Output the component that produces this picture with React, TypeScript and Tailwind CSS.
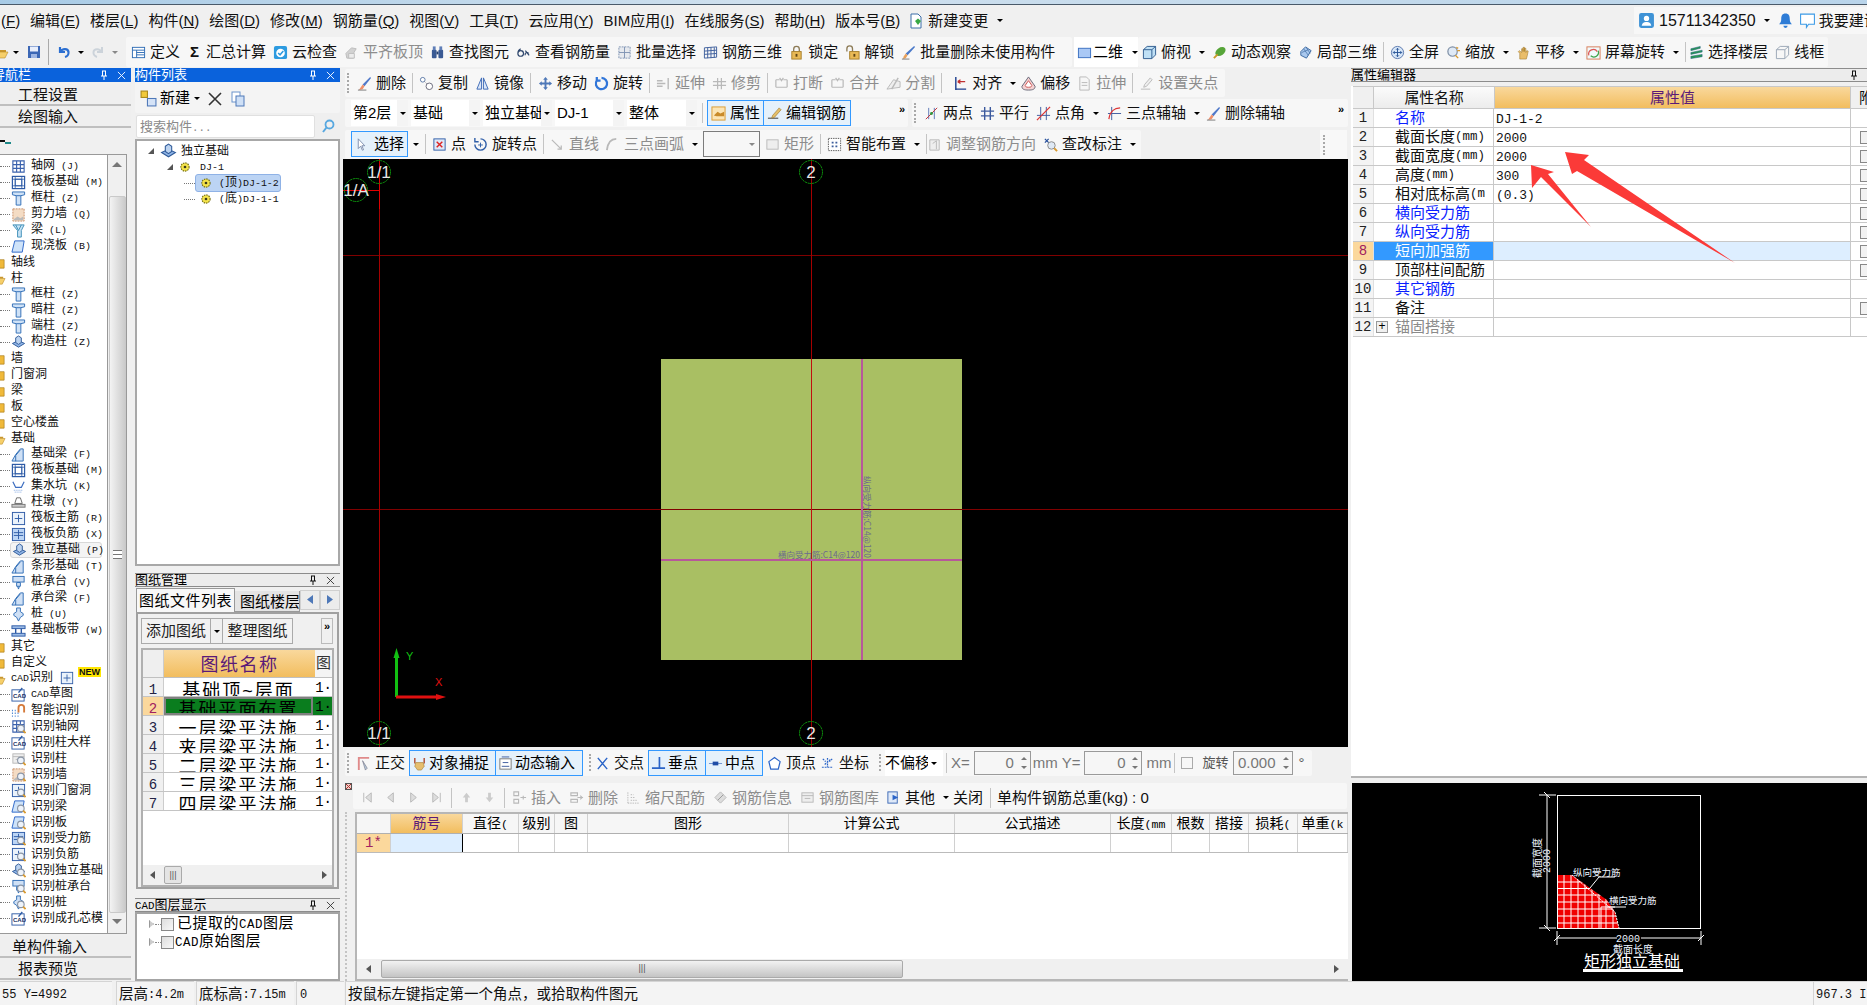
import type { ReactNode } from 'react';

const sans = "[font-family:'Liberation_Sans','Noto_Sans_CJK_SC',sans-serif]";

// half-width latin next to the square CJK glyphs, like the SimSun of the original
function Mx({ t }: { t: string }) {
  const parts = t.split(/([\x20-\x7e]+)/).filter(Boolean);
  return (
    <>
      {parts.map((p, i) =>
        /^[\x20-\x7e]+$/.test(p) ? (
          <span key={i} className="[font-family:'Liberation_Mono',monospace] text-[0.83em] whitespace-pre">{p}</span>
        ) : (
          <span key={i}>{p}</span>
        ),
      )}
    </>
  );
}

const B = '#2f6db5';
const G = '#b9b9b9';

const icons: Record<string, ReactNode> = {
  folder: <><path d="M1 5h5l1 1h6v2H4L1 14z" fill="#c9962c" /><path d="M3 8h12l-3 6H1z" fill="#f6cf6a" stroke="#b98a25" strokeWidth=".6" /></>,
  folderc: <><path d="M1 3h5l1 2h7v9H1z" fill="#f0b93a" stroke="#a87a1c" strokeWidth=".7" /></>,
  save: <><rect x="2" y="2" width="12" height="12" fill="#3c67b5" /><rect x="4" y="2.5" width="8" height="5" fill="#e8eefb" /><rect x="5" y="10" width="6" height="4" fill="#9db5e3" /></>,
  undo: <path d="M4 3v5h5M4.5 8C6 4.5 12 4 12.5 8c.3 2.5-1.5 4.5-3.5 5" fill="none" stroke="#2c6fd1" strokeWidth="2.2" />,
  redo: <path d="M12 3v5H7M11.5 8C10 4.5 4 4 3.5 8c-.3 2.5 1.5 4.5 3.5 5" fill="none" stroke="#ccd3da" strokeWidth="2" />,
  table: <><rect x="1.5" y="2.5" width="13" height="11" fill="#fff" stroke={B} /><path d="M1.5 5.5h13M6 5.5v8M6 8h8M6 10.5h8" stroke={B} /></>,
  cloud: <><rect x="1" y="1" width="14" height="14" rx="2" fill="#2d9be0" /><circle cx="8" cy="8.5" r="4.6" fill="#fff" /><path d="M5.5 8.5l2 2 3.5-4" fill="none" stroke="#2d9be0" strokeWidth="1.6" /></>,
  flush: <><path d="M2 9l6-6 5 1-3 5v5H3z" fill="#d2d2d2" stroke="#bdbdbd" /><path d="M5 9h6v5H5z" fill="#ececec" stroke="#bdbdbd" /></>,
  binoc: <><rect x="2" y="5" width="5" height="9" rx="1" fill="#3a5a94" /><rect x="9" y="5" width="5" height="9" rx="1" fill="#3a5a94" /><rect x="3" y="1.5" width="3" height="4" fill="#5f7eb7" /><rect x="10" y="1.5" width="3" height="4" fill="#5f7eb7" /><rect x="7" y="7" width="2" height="3" fill="#26406f" /></>,
  look: <path d="M2 9a3 3 0 1 0 6 0 3 3 0 1 0-6 0M2 9c0-3 1-4 3-5M10 6l4 5m-4 0a2 2 0 1 1 3.5-2" fill="none" stroke="#30486e" strokeWidth="1.3" />,
  batch: <><rect x="2" y="2" width="12" height="12" fill="#e6e9ee" stroke="#7f93b3" strokeDasharray="2 1" /><path d="M8 2v12M2 8h12" stroke="#7f93b3" /></>,
  grid3: <path d="M1.5 3l13-1v11l-13 1zM5 3v11M8.500 2.500v11.500M12 2.500v11M1.500 6.500l13-1M1.500 10l13-1" fill="none" stroke="#3d5e9c" />,
  lock: <><path d="M5 7V4.500a3 3 0 0 1 6 0V7" fill="none" stroke="#8c7a55" strokeWidth="1.4" /><rect x="3" y="7" width="10" height="8" fill="#e9b955" stroke="#a8802c" /><rect x="7" y="9.500" width="2" height="3" fill="#5f4515" /></>,
  unlock: <><path d="M2 7V4a3 3 0 0 1 6 0v3" fill="none" stroke="#8c7a55" strokeWidth="1.4" /><rect x="5" y="7" width="10" height="8" fill="#e9b955" stroke="#a8802c" /><rect x="9" y="9.500" width="2" height="3" fill="#5f4515" /></>,
  brush: <><path d="M14 1l1 1-8 9-2-2z" fill="#4a79c9" /><path d="M5 9l2 2-2 3-3 1 1-3z" fill="#e8a05a" /><path d="M1 15h8" stroke="#777" /></>,
  rect2: <rect x="1.500" y="3.500" width="13" height="10" fill="#a9c8f5" stroke="#3a6fc0" />,
  cube: <><path d="M1.500 5l4-3.500h9v9l-4 4h-9z" fill="#bfe0f5" stroke="#2f5c8f" /><path d="M1.500 5h9v9.500M10.500 5l4-3.500" fill="none" stroke="#2f5c8f" /></>,
  orbit: <><ellipse cx="9" cy="7" rx="6" ry="4" transform="rotate(-35 9 7)" fill="#57a539" /><path d="M2 14l4-4" stroke="#c99a2a" strokeWidth="2" /></>,
  local: <><path d="M3 7l5-5 6 4-5 8-6-3z" fill="#a9c8ee" stroke="#3b689f" /><path d="M6 4l5 7M9 3l4 6M4 8l7-3" stroke="#3b689f" strokeWidth=".7" /></>,
  full: <><circle cx="8" cy="8" r="6.500" fill="#d8e7f8" stroke="#5a78ad" /><path d="M8 3.500v9M3.500 8h9M6.500 5L8 3.500 9.500 5M6.500 11L8 12.500 9.500 11M5 6.500L3.500 8 5 9.500M11 6.500L12.500 8 11 9.500" fill="none" stroke="#2a5598" /></>,
  zoom: <><circle cx="7" cy="7" r="5" fill="#dfe9f5" stroke="#7d8ea5" strokeWidth="1.300" /><path d="M11 2.500l2 1M12 6l3 0M10 11l3 3" stroke="#d99a2f" strokeWidth="1.500" /></>,
  pan: <path d="M4 15V9L2.500 7l1-1L6 8V4h1.500v3V2.500H9V7V3.500h1.500V8l1-2 1.500.5-1 5L11 15z" fill="#e9bd6a" stroke="#a07a2c" strokeWidth=".6" />,
  rot: <><rect x="1" y="2" width="14" height="13" fill="#f0fafc" stroke="#d77a55" /><path d="M3 11a5 5 0 0 1 9-4" fill="none" stroke="#d55" strokeWidth="1.300" /><path d="M13 6a5 5 0 0 1-8 5.500" fill="none" stroke="#3da34c" strokeWidth="1.300" /></>,
  floors: <><path d="M2 4l10-2.500v2L2 6zM2 8l12-2.500v2L2 10zM2 12l12-2v2.500L2 14.500z" fill="#2a9a55" stroke="#18517f" strokeWidth=".5" /></>,
  wire: <path d="M1.500 5l4-3.500h9v9l-4 4h-9zM1.500 5h9v9.500M10.500 5l4-3.500" fill="none" stroke="#9aa6b5" />,
  doc: <><path d="M3 1h7l3 3v11H3z" fill="#fff" stroke="#3c6ea8" /><path d="M7 8l3-2.500L13 8l-3 4z" fill="#38a844" /></>,
  user: <><rect x="1" y="1" width="14" height="14" rx="2" fill="#3f93d6" /><circle cx="8" cy="6" r="2.500" fill="#fff" /><path d="M3.500 13c.5-3 2.500-3.500 4.500-3.500s4 .5 4.500 3.500z" fill="#fff" /></>,
  bell: <path d="M8 1.500c3 0 4 2 4 5 0 3 1 3.500 2 5H2c1-1.500 2-2 2-5 0-3 1-5 4-5zM6 13h4a2 2 0 0 1-4 0z" fill="#2e7cd6" />,
  chat: <path d="M1.500 2h13v9.500H9L7 14.500v-3H1.500z" fill="#fff" stroke="#3b9ae6" />,
  erase: <><path d="M14 1l1 1-7 9-2-2z" fill="#5079c9" /><path d="M6 9l2 2-2 3-4 1 2-3z" fill="#ef8f6a" /><path d="M1 15h9" stroke="#777" /></>,
  copy: <><circle cx="4" cy="4" r="2.500" fill="#fff" stroke="#5e7ba8" /><circle cx="11" cy="11" r="3.500" fill="#fff" stroke="#667" /><path d="M6 6l2 2" stroke="#667" strokeDasharray="1 1" /></>,
  mirror: <><path d="M7 2v12H2zM9 2v12h5z" fill="#dbe7f8" stroke="#3c69b5" /></>,
  move: <path d="M8 1l2.500 3H9v3h3V5.500L15 8l-3 2.500V9H9v3h1.500L8 15l-2.500-3H7V9H4v1.500L1 8l3-2.500V7h3V4H5.500z" fill="#4e78b8" />,
  rotate: <path d="M8 2a6 6 0 1 1-5 2.600M3 1v4h4" fill="none" stroke="#3176d9" strokeWidth="2.400" />,
  extend: <path d="M1 8h9M1 5h6M1 11h6M13 2v12" fill="none" stroke={G} strokeWidth="1.500" />,
  trim: <path d="M1 6h14M1 10h14M6 2v12M10 2v12" fill="none" stroke={G} strokeWidth="1.300" />,
  breakk: <path d="M2 4h4M10 4h4M2 12h12M2 4v8M14 4v8M6 2l2 3 2-3" fill="none" stroke={G} strokeWidth="1.300" />,
  split: <><path d="M1 14l14-2V6L8 4z" fill="#eee" stroke={G} /><path d="M6 14L13 2" stroke={G} strokeWidth="1.500" /></>,
  align: <><path d="M3 1v14M3 14h11" fill="none" stroke="#1c3f8f" strokeWidth="1.500" /><path d="M5 6h8M5 6l3-2M5 6l3 2" fill="none" stroke="#c03030" strokeWidth="1.300" /></>,
  offset: <><path d="M8 1l7 10c0 3-2 4-7 4s-7-1-7-4z" fill="#f4d2d2" stroke="#667" /><path d="M8 5l3.500 5c0 1.500-1 2-3.500 2s-3.500-.5-3.500-2z" fill="#fff" stroke="#c55" /></>,
  stretch: <><path d="M3 1h7l3 3v11H3z" fill="#f6f6f6" stroke={G} /><path d="M5 7h6M5 10h6" stroke={G} /></>,
  grip: <><path d="M2 14h10M12 2L6 9l-1 3 3-1 6-7z" fill="#eee" stroke={G} /></>,
  prop: <><rect x="1" y="1" width="14" height="14" fill="#fbe5b5" stroke="#d99a2f" /><path d="M3 10l4-4 3 2 4-2v5H6z" fill="#c98b2a" /></>,
  pen: <><path d="M1 13h11" stroke="#333" /><path d="M13 2l2 2-7 8-3 1 1-3z" fill="#e6c06a" stroke="#a07a2c" strokeWidth=".7" /></>,
  twop: <><path d="M2 14L14 2M5 2v12M11 2v12" stroke="#5b76b8" /><path d="M2 14L14 2" stroke="#c33" /><circle cx="8" cy="8" r="1.500" fill="#2a9a3c" /></>,
  para: <path d="M1 5.500h14M1 10.500h14M5 1v14M11 1v14" fill="none" stroke="#3c5a9e" strokeWidth="1.500" />,
  angle: <><path d="M5 1v14M11 1v14M1 10h14" stroke="#3c5a9e" /><path d="M1 15L15 1" stroke="#d33" strokeWidth="1.300" /></>,
  arc3: <><path d="M5 1v14M1 8h14" stroke="#3c5a9e" /><path d="M2 14C3 6 8 2 14 2" fill="none" stroke="#d33" strokeWidth="1.300" /></>,
  cursor: <path d="M4 1v12l3-3 2 5 1.500-.5L8.500 9.500H12z" fill="#fff" stroke="#6c7fa2" />,
  dot: <><rect x="2" y="2" width="12" height="12" fill="#dfe8f8" stroke="#2f5ea8" /><path d="M5 5l6 6M11 5l-6 6" stroke="#d22" strokeWidth="1.500" /></>,
  rpoint: <><path d="M8 2a6 6 0 1 1-6 6M2 1v4h4" fill="none" stroke="#2f5ea8" strokeWidth="1.500" /><path d="M8 6v5M5.500 8.500h5" stroke="#2f5ea8" /></>,
  line: <path d="M2 3l10 10M12 9v4H8" fill="none" stroke={G} strokeWidth="1.300" />,
  arc: <path d="M2 14C3 6 7 2 12 2" fill="none" stroke={G} strokeWidth="2" />,
  box: <rect x="2" y="3" width="12" height="10" fill="#eee" stroke={G} />,
  smart: <><rect x="1.500" y="1.500" width="13" height="13" fill="#fff" stroke="#555" strokeDasharray="1.500 1" /><path d="M5 5h2v2H5zM9 9h2v2H9zM9 5h2v2H9zM5 9h2v2H5z" fill="#3d5e9c" /></>,
  turn: <><path d="M3 3h10v11H3z" fill="#eee" stroke={G} /><path d="M6 7l4-3v9" fill="none" stroke={G} /></>,
  check: <><path d="M2 2l7 7M6 2L2 6" fill="none" stroke="#27509c" strokeWidth="1.300" /><circle cx="9" cy="9" r="4" fill="#dfe9f5" stroke="#888" /><path d="M12 12l3 3" stroke="#d99a2f" strokeWidth="2" /></>,
  ortho: <><path d="M2 2h12M3 2v13" stroke="#e08a8a" strokeWidth="2" /><path d="M7 5l5 8-2 2z" fill="#bcd" stroke="#667" strokeWidth=".6" /></>,
  snap: <><path d="M3 2v6M13 2v6" stroke="#b04a30" strokeWidth="1.500" /><path d="M4 7h8l1 4-3 4H6l-3-4z" fill="#e6be6e" stroke="#a07a2c" strokeWidth=".6" /></>,
  dyn: <><rect x="2" y="3" width="12" height="11" fill="#fff" stroke="#777" /><path d="M4 1h8M4 11h8M5 7h6" stroke="#3c5a9e" /></>,
  cross: <path d="M3 2l10 12M13 2L3 14" stroke="#2a64c8" strokeWidth="1.500" />,
  perp: <path d="M1 13h14M9 1v12" fill="none" stroke="#2a64c8" strokeWidth="1.800" />,
  mid: <><path d="M1 8h14" stroke="#6c8fd0" /><rect x="5" y="6" width="6" height="4" fill="#1f4ca6" /></>,
  vertex: <path d="M8 1.500l6 4.500-2 8H4L2 6z" fill="#fff" stroke="#2a64c8" strokeWidth="1.300" />,
  coord: <path d="M8 2v10M2 12h11M3 3l3 3M13 3l-3 3M5 9l6-5" fill="none" stroke="#2a64c8" strokeDasharray="2 1" strokeWidth="1.300" />,
  first: <path d="M4 3v10M12 3L6 8l6 5z" fill="#ddd" stroke={G} />,
  prev: <path d="M11 3L5 8l6 5z" fill="#ddd" stroke={G} />,
  next: <path d="M5 3l6 5-6 5z" fill="#ddd" stroke={G} />,
  last: <path d="M12 3v10M4 3l6 5-6 5z" fill="#ddd" stroke={G} />,
  up: <path d="M8 3l4 5H9.500v5h-3V8H4z" fill="#ccc" />,
  down: <path d="M8 13l4-5H9.500V3h-3v5H4z" fill="#ccc" />,
  insert: <path d="M2 2h5v4H2zM2 10h5v4H2zM9 8h6M12 6v4" fill="none" stroke={G} strokeWidth="1.200" />,
  del: <path d="M2 3h7v3H2zM2 10h7v3H2zM9 8h6M12 6l2 2-2 2" fill="none" stroke={G} strokeWidth="1.200" />,
  scale: <path d="M2 14V2M2 14h12M5 11h7M5 8h5M5 5h3" fill="none" stroke={G} strokeDasharray="1.500 1" />,
  info: <><path d="M2 8l6-6 6 6-6 6z" fill="#ddd" stroke={G} /><path d="M5 11l6-6" stroke="#999" /></>,
  lib: <><rect x="2" y="3" width="12" height="10" fill="#eee" stroke={G} /><path d="M2 6h12M5 9h6" stroke={G} /></>,
  other: <><rect x="2" y="2" width="10" height="12" fill="#dfe9f8" stroke="#3c69b5" /><path d="M7 5l6 3-6 3z" fill="#2a64c8" /></>,
  gear: <><circle cx="8" cy="8" r="5.500" fill="#f4e34a" stroke="#6f6a12" strokeWidth="1.400" strokeDasharray="2 1.200" /><circle cx="8" cy="8" r="1.800" fill="#3a3a1a" /></>,
  found: <><path d="M1.500 9l6.500-3 6.500 3-6.500 4z" fill="#8fb4e6" stroke="#305b99" /><path d="M5 3l3-2 3 2v5l-3 2-3-2z" fill="#bcd3f0" stroke="#305b99" /></>,
  newb: <><rect x="1" y="1" width="6" height="6" fill="#f1c93b" stroke="#a8871b" /><rect x="7" y="8" width="8" height="7" fill="#d5e3f7" stroke="#4e78b8" /></>,
  sheets: <><rect x="2" y="1" width="8" height="10" fill="#fff" stroke="#6a93cc" /><rect x="6" y="5" width="8" height="10" fill="#cfe0f6" stroke="#4e78b8" /></>,
  search: <><circle cx="9.500" cy="6.500" r="4" fill="none" stroke="#58a8e0" strokeWidth="1.800" /><path d="M6.500 9.500L3 14" stroke="#58a8e0" strokeWidth="2" /></>,
  axis: <path d="M2 2v12h12V2zM6 2v12M10 2v12M2 6h12M2 10h12" fill="none" stroke="#3b62ad" strokeWidth="1.200" />,
  raft: <><rect x="1.500" y="1.500" width="13" height="13" fill="none" stroke="#2e5ba6" strokeWidth="1.300" /><rect x="4.500" y="4.500" width="7" height="7" fill="none" stroke="#2e5ba6" /><path d="M1.500 4.500h13M1.500 11.500h13M4.500 1.500v13M11.500 1.500v13" stroke="#2e5ba6" strokeWidth=".8" /></>,
  pillar: <><path d="M1.500 1h13v3l-4 1v10h-5V5l-4-1z" fill="#cfe2f7" stroke="#2f6db5" /><path d="M5.500 5h5" stroke="#2f6db5" /></>,
  wall: <><rect x="2" y="2" width="12" height="13" fill="#f4dcc4" stroke="#c78e66" strokeDasharray="2 1" /><path d="M3 13l4-3 3 2 3-2v4H3z" fill="#bbb" /></>,
  beam: <><path d="M2 2h12l-3 6v7H7V8z" fill="#c6e2f4" stroke="#3f8fb7" /><path d="M5 2l3 6 3-6" fill="none" stroke="#3f8fb7" /></>,
  slab: <path d="M4 2h10l-2 12H1z" fill="#cfe3f9" stroke="#2a64c8" />,
  gbeam: <><path d="M1 15l4-7 5-6h3v13z" fill="#cfe0f5" stroke="#2f6db5" /><path d="M5 15V9l5-6" fill="none" stroke="#2f6db5" /></>,
  pit: <><path d="M2 3l3 6h6l3-6" fill="none" stroke="#3c6dc0" strokeWidth="1.300" /><path d="M3 12h10M4 14h8" stroke="#7ea4df" strokeDasharray="1 1" /></>,
  pier: <><path d="M6 3h4l2 6H4z" fill="#fff" stroke="#666" /><rect x="1" y="10" width="14" height="3" fill="#ccc" stroke="#777" /></>,
  mainb: <><rect x="1.500" y="1.500" width="13" height="13" fill="#eaf2fb" stroke="#2e5ba6" /><path d="M8 4v8M4 8h8" stroke="#2e5ba6" /></>,
  negb: <><rect x="1.500" y="1.500" width="13" height="13" fill="#bcd5f5" stroke="#2e5ba6" /><path d="M8 3v10M3 6h10M3 9h10" stroke="#2e5ba6" /></>,
  cap: <><rect x="2" y="1.500" width="12" height="6" fill="#cfe0f5" stroke="#2f6db5" /><path d="M6 8h4v4H6zM7 12l1 3 1-3" fill="#cfe0f5" stroke="#2f6db5" /></>,
  pile: <path d="M6 1h4v4l3 2v2l-3 2-2 4-2-4-3-2V7l3-2z" fill="#cfe0f5" stroke="#2f6db5" />,
  band: <><rect x="1" y="3" width="14" height="3" fill="#9bbbe6" stroke="#2e5ba6" /><rect x="1" y="11" width="14" height="3" fill="#9bbbe6" stroke="#2e5ba6" /><path d="M5 6v5M11 6v5" stroke="#2e5ba6" strokeWidth="1.500" /></>,
  cad: <><rect x="1" y="3" width="13" height="12" fill="#fff" stroke="#2e5ba6" /><path d="M12 1L8 6" stroke="#2e5ba6" strokeWidth="1.500" /><text x="2" y="12" fontSize="6.500" fontWeight="700" fill="#1b2f66" fontFamily="Liberation Sans">CAD</text></>,
  smartid: <><path d="M1 14h1M4 14h1M7 14h1M1 11h1M4 11h1M1 8h1M4 8h1M7 11h1" stroke="#3a7ad0" strokeWidth="1.500" /><path d="M8 10V5a3 3 0 0 1 6 0v5" fill="none" stroke="#d57a3a" strokeWidth="2" /></>,
};

const lens = (
  <>
    <circle cx="10.500" cy="10" r="3.500" fill="#eef3fa" stroke="#8a95a5" strokeWidth="1.200" />
    <path d="M13 12.500l2.500 2.500" stroke="#d99a2f" strokeWidth="1.800" />
  </>
);

function Ic({ n, s = 16, find }: { n: string; s?: number; find?: boolean }) {
  return (
    <svg viewBox="0 0 16 16" width={s} height={s} className="shrink-0">
      {icons[n]}
      {find && lens}
    </svg>
  );
}

function Caret({ dim }: { dim?: boolean }) {
  return <span className={`shrink-0 w-0 h-0 border-x-[3px] border-x-transparent border-t-[3px] ${dim ? 'border-t-[#888]' : 'border-t-black'}`} />;
}

function Sep() {
  return <span className="shrink-0 w-px h-[20px] bg-[#c4c4c4] mx-[-1px]" />;
}

function Handle() {
  return <span className="shrink-0 h-[20px] w-[3px] border-l-[2px] border-dotted border-[#a8a8a8]" />;
}

function Tool({ i, t, dim, caret, glyph, className = '' }: { i?: string; t: string; dim?: boolean; caret?: boolean; glyph?: string; className?: string }) {
  return (
    <div className={`flex items-center shrink-0 h-full gap-[4px] whitespace-nowrap ${dim ? 'text-[#8d8d8d]' : 'text-[#111]'} ${className}`}>
      {i && <Ic n={i} s={15} />}
      {glyph && <span className="w-[15px] text-center font-bold">{glyph}</span>}
      <span>{t}</span>
      {caret && <span className="ml-[4px] flex"><Caret /></span>}
    </div>
  );
}

function Strip({ children, className = '' }: { children: ReactNode; className?: string }) {
  return <div className={`flex items-center gap-[7px] bg-[#f7f7f7] rounded-[2px] text-[15px] leading-[18px] ${className}`}>{children}</div>;
}

function Combo({ w, t }: { w: string; t: string }) {
  return (
    <div className={`flex items-center h-[26px] bg-white shrink-0 overflow-hidden ${w}`}>
      <span className="flex-1 pl-[2px] whitespace-nowrap overflow-hidden">{t}</span>
      <span className="w-[11px] h-full bg-[#f4f4f4] flex items-center justify-center"><Caret /></span>
    </div>
  );
}

const menu: [string, string][] = [
  ['编辑', 'E'], ['楼层', 'L'], ['构件', 'N'], ['绘图', 'D'], ['修改', 'M'], ['钢筋量', 'Q'], ['视图', 'V'], ['工具', 'T'],
  ['云应用', 'Y'], ['BIM应用', 'I'], ['在线服务', 'S'], ['帮助', 'H'], ['版本号', 'B'],
];

function MenuBar() {
  return (
    <div className="h-[31px] flex items-center text-[15px] leading-[18px] text-[#111] pl-[1px] shrink-0">
      <span className="w-[20px] mr-[9px]">(<u>F</u>)</span>
      <div className="flex items-center gap-[10px]">
        {menu.map(([a, k]) => (
          <span key={a} className="whitespace-nowrap">{a}(<u>{k}</u>)</span>
        ))}
      </div>
      <div className="flex items-center ml-[8px] gap-[4px]">
        <Ic n="doc" />
        <span>新建变更</span>
        <span className="ml-[5px] flex"><Caret /></span>
      </div>
      <div className="ml-auto flex items-center h-[27px] w-[233px] bg-[#f7f7f7] pl-[4px] gap-[4px] overflow-hidden whitespace-nowrap">
        <Ic n="user" s={17} />
        <span className="[font-family:'Liberation_Sans',sans-serif] text-[16px]">15711342350</span>
        <span className="ml-[4px] mr-[3px] flex"><Caret /></span>
        <Ic n="bell" s={17} />
        <span className="ml-[1px]"><Ic n="chat" s={17} /></span>
        <span className="ml-[-1px]">我要建议</span>
      </div>
    </div>
  );
}

function TopTools() {
  return (
    <div className="h-[32px] flex items-stretch shrink-0 pb-[1px] pt-[1px] text-[15px]">
      <div className="w-[126px] flex items-center shrink-0 overflow-hidden">
        <span className="ml-[-7px]"><Ic n="folder" /></span>
        <span className="ml-[4px] flex"><Caret /></span>
        <span className="ml-[7px]"><Ic n="save" /></span>
        <span className="w-px h-[26px] bg-[#aaa] ml-[6px]" />
        <span className="ml-[7px]"><Ic n="undo" /></span>
        <span className="ml-[6px] flex"><Caret /></span>
        <span className="ml-[6px]"><Ic n="redo" /></span>
        <span className="ml-[6px] flex"><Caret dim /></span>
      </div>
      <Strip className="w-[946px] pl-[5px]">
        <Tool i="table" t="定义" />
        <Tool glyph="Σ" t="汇总计算" />
        <Tool i="cloud" t="云检查" />
        <Tool i="flush" t="平齐板顶" dim />
        <Tool i="binoc" t="查找图元" />
        <Tool i="look" t="查看钢筋量" />
        <Tool i="batch" t="批量选择" />
        <Tool i="grid3" t="钢筋三维" />
        <Tool i="lock" t="锁定" />
        <Tool i="unlock" t="解锁" />
        <Tool i="brush" t="批量删除未使用构件" />
      </Strip>
      <div className="w-[64px] ml-[2px] flex items-center bg-white pl-[3px] shrink-0 whitespace-nowrap">
        <Ic n="rect2" s={15} />
        <span className="ml-[1px]">二维</span>
        <span className="ml-[9px] flex"><Caret /></span>
      </div>
      <Strip className="w-[690px] pl-[4px]">
        <Tool i="cube" t="俯视" caret />
        <Tool i="orbit" t="动态观察" />
        <Tool i="local" t="局部三维" />
        <Sep />
        <Tool i="full" t="全屏" />
        <Tool i="zoom" t="缩放" caret />
        <Tool i="pan" t="平移" caret />
        <Tool i="rot" t="屏幕旋转" caret />
        <Sep />
        <Tool i="floors" t="选择楼层" className="-ml-[3px]" />
        <Tool i="wire" t="线框" />
      </Strip>
    </div>
  );
}

function PanelHead({ t, active, close = true, clip }: { t: string; active?: boolean; close?: boolean; clip?: number }) {
  return (
    <div className={`h-[14px] flex items-center shrink-0 overflow-hidden text-[13px] leading-[14px] ${active ? 'bg-[#0a62dc] text-white' : 'bg-[#ececec] border-y border-[#8c8c8c] text-black'}`}>
      <span className="flex-1 whitespace-nowrap overflow-hidden" style={clip ? { marginLeft: clip } : undefined}><Mx t={t} /></span>
      <svg viewBox="0 0 10 10" width="10" height="10" className="mr-[8px] shrink-0">
        <path d="M3 1h4M3.500 1v5M6.500 1v5M2 6h6M5 6v4" fill="none" stroke={active ? '#fff' : '#111'} />
      </svg>
      {close && (
        <svg viewBox="0 0 10 10" width="9" height="9" className="mr-[5px] shrink-0">
          <path d="M1 1l8 8M9 1l-8 8" stroke={active ? '#fff' : '#333'} />
        </svg>
      )}
    </div>
  );
}

function NavBtn({ t, pad = 'pl-[18px]' }: { t: string; pad?: string }) {
  return (
    <div className={`h-[22px] flex items-center ${pad} pt-[2px] text-[15px] text-[#111] bg-[#efefef] border-b-2 border-[#bfbfbf] shrink-0`}>{t}</div>
  );
}

type Row = { t: string; i?: string; find?: boolean; kind?: 'open' | 'closed' };

const navRows: Row[] = [
  { t: '轴网 (J)', i: 'axis' }, { t: '筏板基础 (M)', i: 'raft' }, { t: '框柱 (Z)', i: 'pillar' }, { t: '剪力墙 (Q)', i: 'wall' },
  { t: '梁 (L)', i: 'beam' }, { t: '现浇板 (B)', i: 'slab' }, { t: '轴线', kind: 'closed' }, { t: '柱', kind: 'open' },
  { t: '框柱 (Z)', i: 'pillar' }, { t: '暗柱 (Z)', i: 'pillar' }, { t: '端柱 (Z)', i: 'pillar' }, { t: '构造柱 (Z)', i: 'found' },
  { t: '墙', kind: 'closed' }, { t: '门窗洞', kind: 'closed' }, { t: '梁', kind: 'closed' }, { t: '板', kind: 'closed' },
  { t: '空心楼盖', kind: 'closed' }, { t: '基础', kind: 'open' }, { t: '基础梁 (F)', i: 'gbeam' }, { t: '筏板基础 (M)', i: 'raft' },
  { t: '集水坑 (K)', i: 'pit' }, { t: '柱墩 (Y)', i: 'pier' }, { t: '筏板主筋 (R)', i: 'mainb' }, { t: '筏板负筋 (X)', i: 'negb' },
  { t: '独立基础 (P)', i: 'found' }, { t: '条形基础 (T)', i: 'gbeam' }, { t: '桩承台 (V)', i: 'cap' }, { t: '承台梁 (F)', i: 'gbeam' },
  { t: '桩 (U)', i: 'pile' }, { t: '基础板带 (W)', i: 'band' }, { t: '其它', kind: 'closed' }, { t: '自定义', kind: 'closed' },
  { t: 'CAD识别', kind: 'open' }, { t: 'CAD草图', i: 'cad' }, { t: '智能识别', i: 'smartid' }, { t: '识别轴网', i: 'axis', find: true },
  { t: '识别柱大样', i: 'cad' }, { t: '识别柱', i: 'lib', find: true }, { t: '识别墙', i: 'wall', find: true }, { t: '识别门窗洞', i: 'mainb', find: true },
  { t: '识别梁', i: 'slab', find: true }, { t: '识别板', i: 'slab', find: true }, { t: '识别受力筋', i: 'negb', find: true }, { t: '识别负筋', i: 'mainb', find: true },
  { t: '识别独立基础', i: 'found', find: true }, { t: '识别桩承台', i: 'cap', find: true }, { t: '识别桩', i: 'pile', find: true }, { t: '识别成孔芯模', i: 'cad' },
];

function NavTree() {
  return (
    <div className="flex-1 min-w-0 bg-white pt-[3px] overflow-hidden text-[12px] leading-[16px] text-[#111] border-r border-[#999]">
      {navRows.map((r, idx) =>
        r.kind ? (
          <div key={idx} className="h-[16px] flex items-center whitespace-nowrap">
            <span className="ml-[-9px] mr-[5px] flex"><Ic n={r.kind === 'open' ? 'folder' : 'folderc'} s={15} /></span>
            <span><Mx t={r.t} /></span>
            {r.t === 'CAD识别' && (
              <>
                <span className="ml-[7px] flex"><Ic n="mainb" s={14} /></span>
                <span className="ml-[4px] px-px bg-[#ffe600] text-[9px] leading-[10px] font-bold [font-family:'Liberation_Sans',sans-serif] self-start mt-[-3px]">NEW</span>
              </>
            )}
          </div>
        ) : (
          <div key={idx} className="h-[16px] flex items-center whitespace-nowrap">
            <span className="w-[10px] border-t border-dotted border-[#777] shrink-0" />
            <span className={`flex items-center gap-[4px] pl-[1px] pr-[4px] h-[16px] rounded-[3px] ${r.t.startsWith('独立基础') ? 'bg-[#f4f4f4] border border-[#d8d8d8] w-[92px]' : ''}`}>
              <Ic n={r.i!} s={15} find={r.find} />
              <span className="ml-[1px]"><Mx t={r.t} /></span>
            </span>
          </div>
        ),
      )}
    </div>
  );
}

function VScroll() {
  return (
    <div className="w-[18px] shrink-0 bg-[#f0f0f0] flex flex-col items-center py-[6px]">
      <span className="w-0 h-0 border-x-[5px] border-x-transparent border-b-[5px] border-b-[#777] mt-[1px]" />
      <div className="w-[17px] flex-1 mt-[29px] mb-[6px] rounded-[2px] bg-[linear-gradient(90deg,#f3f3f3,#cbcbcb)] border border-[#c9c9c9] flex items-center justify-center">
        <span className="w-[9px] h-[9px] border-y border-[#777] bg-[linear-gradient(#fff_40%,#777_40%,#777_60%,#fff_60%)]" />
      </div>
      <span className="w-0 h-0 border-x-[5px] border-x-transparent border-t-[5px] border-t-[#777] mb-[3px]" />
    </div>
  );
}

function NavPanel() {
  return (
    <div className="w-[131px] shrink-0 flex flex-col">
      <PanelHead t="导航栏" active clip={-8} />
      <div className="h-[2px] shrink-0" />
      <NavBtn t="工程设置" />
      <NavBtn t="绘图输入" />
      <div className="h-[26px] shrink-0 flex items-center">
        <span className="w-[5px] h-[2px] bg-[#111]" />
        <span className="w-[6px] h-[2px] bg-[#1e8a8a] mt-[3px]" />
      </div>
      <div className="h-[780px] w-[127px] flex border border-l-0 border-[#999] shrink-0">
        <NavTree />
        <VScroll />
      </div>
      <div className="h-[2px] shrink-0" />
      <NavBtn t="单构件输入" pad="pl-[12px]" />
      <NavBtn t="报表预览" />
    </div>
  );
}

function Tri({ open }: { open?: boolean }) {
  return open ? (
    <span className="shrink-0 w-0 h-0 border-l-[6px] border-l-transparent border-b-[6px] border-b-[#555]" />
  ) : (
    <span className="shrink-0 w-[5px] h-[8px] [clip-path:polygon(0_0,100%_50%,0_100%)] bg-[#999]" />
  );
}

function ListPanel() {
  return (
    <div className="flex flex-col h-[498px] shrink-0">
      <PanelHead t="构件列表" active />
      <div className="h-[31px] flex items-center pl-[5px] pt-[2px] text-[15px] shrink-0 bg-[#f4f4f4] rounded-[2px]">
        <Ic n="newb" s={17} />
        <span className="ml-[3px]">新建</span>
        <span className="ml-[4px] flex"><Caret /></span>
        <svg viewBox="0 0 14 14" width="14" height="14" className="ml-[8px]"><path d="M1 1l12 12M13 1L1 13" stroke="#333" strokeWidth="1.600" /></svg>
        <span className="ml-[8px] flex"><Ic n="sheets" /></span>
      </div>
      <div className="h-[26px] flex items-center shrink-0 bg-[#efefef]">
        <div className="w-[179px] ml-px h-[23px] bg-white rounded-[2px] border border-[#e0e0e0] text-[13px] text-[#8a8a8a] pl-[3px] leading-[22px]"><Mx t="搜索构件..." /></div>
        <span className="ml-[5px] flex"><Ic n="search" /></span>
      </div>
      <div className="flex-1 bg-white border-2 border-[#a8a8a8] text-[12px] leading-[16px] pt-[2px] text-[#111] overflow-hidden">
        <div className="h-[16px] flex items-center pl-[11px] gap-[6px]"><Tri open /><Ic n="found" s={17} /><span className="ml-[-2px]">独立基础</span></div>
        <div className="h-[16px] flex items-center pl-[30px] gap-[6px]"><Tri open /><Ic n="gear" s={12} /><span className="ml-[3px]"><Mx t="DJ-1" /></span></div>
        <div className="h-[16px] flex items-center pl-[47px]">
          <span className="w-[11px] border-t border-dotted border-[#777]" />
          <span className="flex items-center h-[18px] w-[86px] rounded-[3px] bg-[#bcd4f4] border border-[#8fb2e6] pl-[4px]">
            <Ic n="gear" s={12} /><span className="ml-[7px]"><Mx t="(顶)DJ-1-2" /></span>
          </span>
        </div>
        <div className="h-[16px] flex items-center pl-[47px]">
          <span className="w-[11px] border-t border-dotted border-[#777]" />
          <span className="flex items-center pl-[5px]"><Ic n="gear" s={12} /><span className="ml-[7px]"><Mx t="(底)DJ-1-1" /></span></span>
        </div>
      </div>
    </div>
  );
}

const sheets = ['基础顶~层面', '基础平面布置', '一层梁平法施', '夹层梁平法施', '二层梁平法施', '三层梁平法施', '四层梁平法施'];

function SheetPanel() {
  return (
    <div className="flex flex-col mt-[7px] h-[316px] shrink-0">
      <PanelHead t="图纸管理" />
      <div className="h-[25px] flex items-end shrink-0 text-[15px] pl-px">
        <div className="w-[99px] h-[24px] bg-[#f8f8f8] border border-b-0 border-[#999] text-center leading-[24px] tracking-[0.5px] shrink-0">图纸文件列表</div>
        <div className="w-[65px] h-[21px] bg-[#e4e4e4] border-b border-r border-[#999] leading-[21px] whitespace-nowrap overflow-hidden pl-[5px] shrink-0">图纸楼层构</div>
        <div className="w-[20px] h-[20px] bg-[#ececec] border border-[#d0d0d0] self-center flex items-center justify-center"><span className="w-[6px] h-[9px] bg-[#4e78b8] [clip-path:polygon(100%_0,0_50%,100%_100%)]" /></div>
        <div className="w-[20px] h-[20px] bg-[#ececec] border border-[#d0d0d0] self-center flex items-center justify-center"><span className="w-[6px] h-[9px] bg-[#4e78b8] [clip-path:polygon(0_0,100%_50%,0_100%)]" /></div>
      </div>
      <div className="flex-1 border-2 border-[#a0a0a0] mx-px bg-[#f0f0f0] flex flex-col px-[3px] min-h-0">
        <div className="h-[34px] flex items-start pt-[4px] text-[15px] shrink-0">
          <div className="h-[26px] w-[70px] border border-[#aaa] bg-[#f2f2f2] text-center leading-[24px] text-[#222]">添加图纸</div>
          <div className="h-[26px] w-[12px] border-y border-r border-[#aaa] flex items-center justify-center"><Caret /></div>
          <div className="h-[26px] w-[70px] border-y border-r border-[#aaa] bg-[#f2f2f2] text-center leading-[24px] text-[#222]">整理图纸</div>
          <div className="ml-auto mr-[1px] h-[26px] w-[12px] border border-[#bbb] text-[11px] leading-[14px] font-bold text-center">»</div>
        </div>
        <div className="flex-1 border-2 border-[#b0b0b0] bg-white flex flex-col min-h-0">
          <div className="h-[28px] flex shrink-0 border-b border-[#c0c0c0]">
            <div className="w-[21px] bg-[#efefef] border-r border-[#ccc]" />
            <div className="w-[151px] bg-[linear-gradient(#f9d89c,#f2bd5e)] text-center text-[18px] tracking-[1.500px] leading-[30px] text-[#5a1a78]">图纸名称</div>
            <div className="flex-1 bg-[#f4f4f4] text-[15px] overflow-hidden leading-[26px] pl-px text-[#333]">图</div>
          </div>
          {sheets.map((s, i) => (
            <div key={s} className="h-[19px] flex shrink-0 border-b border-[#c4c4c4] overflow-hidden">
              <div className={`w-[21px] text-center text-[14px] leading-[24px] border-r border-[#ccc] ${i === 1 ? 'bg-[#fbd89c] text-[#a02060]' : 'bg-[#f0f0f0] text-[#224]'} [font-family:'Liberation_Mono',monospace]`}>{i + 1}</div>
              <div className={`w-[151px] text-center text-[18px] tracking-[2px] whitespace-nowrap overflow-hidden text-black ${i === 1 ? 'bg-[#0a7d1e] border-2 border-[#808080] leading-[23px]' : 'leading-[26px]'}`}>{s}</div>
              <div className={`flex-1 pl-[2px] text-[14px] leading-[20px] [font-family:'Liberation_Mono',monospace] ${i === 1 ? 'bg-[#0a7d1e]' : ''}`}>1·</div>
            </div>
          ))}
          <div className="flex-1" />
          <div className="h-[20px] shrink-0 bg-[#f0f0f0] flex items-center pl-[7px]">
            <span className="w-[5px] h-[8px] bg-[#555] [clip-path:polygon(100%_0,0_50%,100%_100%)]" />
            <span className="ml-[9px] w-[18px] h-[18px] bg-[#e4e4e4] border border-[#aaa] rounded-[2px] text-[9px] leading-[16px] text-center text-[#555]">|||</span>
            <span className="ml-auto mr-[5px] w-[5px] h-[8px] bg-[#555] [clip-path:polygon(0_0,100%_50%,0_100%)]" />
          </div>
        </div>
      </div>
    </div>
  );
}

function LayerPanel() {
  return (
    <div className="flex flex-col mt-[9px] flex-1 min-h-0">
      <PanelHead t="CAD图层显示" />
      <div className="flex-1 bg-white border-2 border-[#a4a4a4] pl-[12px] pt-[1px] text-[15px] leading-[18px] tracking-[0.5px]">
        {['已提取的CAD图层', 'CAD原始图层'].map((t, i) => (
          <div key={t} className="h-[18px] flex items-center">
            <span className="w-[5px] h-[8px] border border-[#999] [clip-path:polygon(0_0,100%_50%,0_100%)] bg-[#ccc]" />
            <span className="w-[6px] ml-px border-t border-dotted border-[#888]" />
            <span className="w-[13px] h-[13px] border border-[#888] bg-[linear-gradient(135deg,#ddd,#f8f8f8)] shrink-0" />
            <span className={`whitespace-nowrap ${i ? 'ml-px' : 'ml-[3px]'}`}><Mx t={t} /></span>
          </div>
        ))}
      </div>
    </div>
  );
}

function EditTools() {
  return (
    <>
      <div className="h-[28px] mt-px flex shrink-0 pl-[2px]">
        <Strip className="w-[880px] pl-[2px]">
          <Handle />
          <Tool i="erase" t="删除" />
          <Sep />
          <Tool i="copy" t="复制" />
          <Tool i="mirror" t="镜像" />
          <Sep />
          <Tool i="move" t="移动" className="ml-[1px]" />
          <Tool i="rotate" t="旋转" />
          <Sep />
          <Tool i="extend" t="延伸" dim />
          <Tool i="trim" t="修剪" dim />
          <Sep />
          <Tool i="breakk" t="打断" dim />
          <Tool i="breakk" t="合并" dim />
          <Tool i="split" t="分割" dim />
          <Sep />
          <Tool i="align" t="对齐" caret className="ml-[5px]" />
          <Tool i="offset" t="偏移" className="-ml-[2px]" />
          <Tool i="stretch" t="拉伸" dim />
          <Sep />
          <Tool i="grip" t="设置夹点" dim />
        </Strip>
      </div>
      <div className="h-[28px] mt-[2px] flex shrink-0 pl-[2px] gap-[4px]">
        <Strip className="w-[563px] pl-[6px] !gap-[3px]">
          <Combo w="w-[57px]" t="第2层" />
          <Combo w="w-[69px]" t="基础" />
          <Combo w="w-[69px]" t="独立基础" />
          <Combo w="w-[69px]" t="DJ-1" />
          <Combo w="w-[70px]" t="整体" />
          <span className="w-px h-[20px] bg-[#c4c4c4] ml-[2px]" />
          <div className="flex h-[26px] ml-[1px]">
            <div className="w-[57px] border border-[#3399ff] bg-[#e5f1fb] flex items-center pl-[3px] gap-[4px]"><Ic n="prop" s={15} />属性</div>
            <div className="w-[87px] border border-l-0 border-[#3399ff] bg-[#e5f1fb] flex items-center pl-[3px] gap-[4px]"><Ic n="pen" s={15} />编辑钢筋</div>
          </div>
          <span className="text-[11px] leading-[12px] font-bold self-start mt-[4px] ml-auto mr-[3px]">»</span>
        </Strip>
        <Strip className="w-[436px] pl-[2px]">
          <Handle />
          <Tool i="twop" t="两点" />
          <Tool i="para" t="平行" />
          <Tool i="angle" t="点角" caret />
          <Tool i="arc3" t="三点辅轴" caret className="ml-[1px]" />
          <Tool i="erase" t="删除辅轴" className="-ml-[1px]" />
          <span className="text-[11px] leading-[12px] font-bold self-start mt-[4px] ml-auto mr-[4px]">»</span>
        </Strip>
      </div>
      <div className="h-[29px] mt-[3px] flex shrink-0 pl-[2px]">
        <Strip className="w-[796px] pl-[6px] pb-[1px]">
          <div className="h-[26px] w-[57px] border border-[#3399ff] bg-[#e5f1fb] flex items-center pl-[3px] gap-[6px] shrink-0"><Ic n="cursor" s={13} />选择</div>
          <span className="flex ml-[-2px]"><Caret /></span>
          <Sep />
          <Tool i="dot" t="点" />
          <Tool i="rpoint" t="旋转点" />
          <Sep />
          <Tool i="line" t="直线" dim />
          <Tool i="arc" t="三点画弧" dim caret className="-ml-[1px]" />
          <div className="w-[57px] h-[26px] -ml-[2px] bg-[#f7f7f7] border border-[#7c7c7c] flex items-center justify-end pr-[4px] shrink-0"><Caret dim /></div>
          <Tool i="box" t="矩形" dim className="-ml-[2px]" />
          <Sep />
          <Tool i="smart" t="智能布置" caret />
          <Sep />
          <Tool i="turn" t="调整钢筋方向" dim className="-ml-[6px]" />
          <Tool i="check" t="查改标注" caret />
        </Strip>
        <div className="ml-auto w-[27px] mr-px bg-[#f8f8f8] flex items-center pl-[3px]"><span className="h-[20px] w-[3px] border-l-[2px] border-dotted border-[#a8a8a8]" /></div>
      </div>
    </>
  );
}

function Canvas() {
  const bubbles: [number, number, string][] = [[379, 172, '1/1'], [356, 190, '1/A'], [811, 172, '2'], [379, 733, '1/1'], [811, 733, '2']];
  return (
    <div className="h-[588px] bg-black shrink-0">
      <svg viewBox="343 159 1005 588" width="1005" height="588" className="block">
        <rect x="661" y="359" width="301" height="301" fill="#a9bf63" />
        <path d="M343 255.500h1005M343 509.500h1005" stroke="#800000" strokeWidth="1" />
        <path d="M379.500 159v588M811.500 159v588" stroke="#a50000" strokeWidth="1" />
        <path d="M811.500 359v301" stroke="#c01010" strokeWidth="1" />
        <path d="M379.500 159v50M343 190.500h36" stroke="#e00000" strokeWidth="1" />
        <path d="M862 359v301M661 560h301" stroke="#b7589a" strokeWidth="2" />
        <text x="778" y="558" fontSize="8.500" fill="#6c6c8c" fontFamily="Noto Sans CJK SC">横向受力筋:C14@120</text>
        <text transform="translate(864 476) rotate(90)" fontSize="8.500" fill="#6c6c8c" fontFamily="Noto Sans CJK SC">纵向受力筋:C14@120</text>
        {bubbles.map(([x, y, t], i) => (
          <g key={i}>
            <circle cx={x} cy={y} r="11.500" fill="none" stroke="#0c8a0c" strokeDasharray="3 .6" />
            <text x={x} y={y + 6} fontSize="17" fill="#e6e6e6" textAnchor="middle" fontFamily="Liberation Sans">{t}</text>
          </g>
        ))}
        <path d="M396.500 697V655" stroke="#12c012" strokeWidth="3" />
        <path d="M396.500 648l-3 10h6z" fill="#12c012" />
        <path d="M396 697h42" stroke="#e01010" strokeWidth="3" />
        <path d="M446 697l-10-3v6z" fill="#e01010" />
        <text x="406" y="660" fontSize="11" fill="#12c012" fontFamily="Liberation Sans">Y</text>
        <text x="435" y="686" fontSize="11" fill="#e01010" fontFamily="Liberation Sans">X</text>
      </svg>
    </div>
  );
}

function NumBox({ w, v }: { w: string; v: string }) {
  return (
    <div className={`${w} h-[24px] border border-[#9a9a9a] bg-[#f6f6f6] flex items-center justify-end text-[#777] shrink-0`}>
      <span>{v}</span>
      <span className="w-[12px] ml-[4px] flex flex-col items-center gap-[6px]">
        <span className="w-0 h-0 border-x-[3px] border-x-transparent border-b-[3px] border-b-[#777]" />
        <span className="w-0 h-0 border-x-[3px] border-x-transparent border-t-[3px] border-t-[#777]" />
      </span>
    </div>
  );
}

function SnapBar() {
  return (
    <div className="h-[33px] flex shrink-0 pl-[2px] pt-[3px] pb-[4px]">
      <Strip className="w-[967px] pl-[2px] !gap-[4px]">
        <Handle />
        <Tool i="ortho" t="正交" className="ml-[2px]" />
        <div className="flex h-[26px]">
          <div className="w-[87px] border border-[#3399ff] bg-[#e5f1fb] flex items-center gap-[2px] pl-[2px]"><Ic n="snap" s={15} />对象捕捉</div>
          <div className="w-[87px] border border-l-0 border-[#3399ff] bg-[#e5f1fb] flex items-center gap-[2px] pl-[2px]"><Ic n="dyn" s={15} />动态输入</div>
        </div>
        <span className="ml-[2px]"><Handle /></span>
        <Tool i="cross" t="交点" />
        <div className="flex h-[26px]">
          <div className="w-[58px] border border-[#3399ff] bg-[#e5f1fb] flex items-center gap-[2px] pl-[2px]"><Ic n="perp" s={15} />垂点</div>
          <div className="w-[57px] border border-l-0 border-[#3399ff] bg-[#e5f1fb] flex items-center gap-[2px] pl-[2px]"><Ic n="mid" s={15} />中点</div>
        </div>
        <Tool i="vertex" t="顶点" />
        <Tool i="coord" t="坐标" />
        <span className="ml-[6px]"><Handle /></span>
        <div className="w-[58px] h-[26px] bg-white flex items-center shrink-0 overflow-hidden whitespace-nowrap"><span className="w-[43px] overflow-hidden">不偏移</span><span className="ml-[3px] flex"><Caret /></span></div>
        <Sep />
        <span className="text-[#777] ml-[1px]">X=</span>
        <NumBox w="w-[57px]" v="0" />
        <span className="text-[#777] whitespace-nowrap ml-[-2px]">mm Y=</span>
        <NumBox w="w-[58px]" v="0" />
        <span className="text-[#777]">mm</span>
        <Sep />
        <span className="w-[12px] h-[12px] border border-[#aaa] shrink-0 ml-[3px]" />
        <span className="ml-[5px] text-[13px] text-[#555] whitespace-nowrap">旋转</span>
        <NumBox w="w-[60px]" v="0.000" />
        <span className="text-[#555] ml-[2px]">°</span>
      </Strip>
    </div>
  );
}

const cols: [string, string][] = [
  ['w-[34px]', ''], ['w-[72px]', '筋号'], ['w-[56px]', '直径('], ['w-[36px]', '级别'], ['w-[33px]', '图'], ['w-[201px]', '图形'], ['w-[166px]', '计算公式'],
  ['w-[156px]', '公式描述'], ['w-[61px]', '长度(mm'], ['w-[38px]', '根数'], ['w-[39px]', '搭接'], ['w-[49px]', '损耗('], ['w-[50px]', '单重(k'],
];

function RebarPanel() {
  return (
    <div className="flex-1 flex flex-col min-h-0">
      <div className="h-[29px] flex shrink-0 pt-[3px] pl-[2px]">
        <svg viewBox="0 0 7 7" width="7" height="7" className="mr-[1px] shrink-0"><rect x=".5" y=".5" width="6" height="6" fill="#f5d0c8" stroke="#555" /><path d="M1 1l5 5M6 1L1 6" stroke="#a33" /></svg>
        <Strip className="w-[994px] pl-[7px] pt-[3px] !gap-[8px] text-[#777]">
          <Ic n="first" s={15} /><Ic n="prev" s={15} /><Ic n="next" s={15} /><Ic n="last" s={15} />
          <Sep />
          <Ic n="up" s={15} /><Ic n="down" s={15} />
          <Sep />
          <Tool i="insert" t="插入" dim />
          <Tool i="del" t="删除" dim />
          <Tool i="scale" t="缩尺配筋" dim />
          <Tool i="info" t="钢筋信息" dim />
          <Tool i="lib" t="钢筋图库" dim />
          <Tool i="other" t="其他" caret className="-ml-[1px]" />
          <Tool t="关闭" className="-ml-[4px]" />
          <Sep />
          <span className="text-[#111] whitespace-nowrap -ml-[1px]">单构件钢筋总重(kg) : 0</span>
        </Strip>
      </div>
      <div className="flex mt-[3px] flex-1 min-h-0">
        <div className="w-[12px] ml-[2px] shrink-0 border-l-[2px] border-r-[2px] border-dotted border-[#c4c4c4] mr-[-2px]" />
        <div className="flex-1 border-2 border-[#b6b6b6] border-r-0 bg-white flex flex-col min-h-0">
          <div className="h-[20px] flex shrink-0 border-b border-[#b0b0b0] text-[14px] leading-[19px]">
            {cols.map(([w, t], i) => (
              <div key={i} className={`${w} shrink-0 text-center overflow-hidden whitespace-nowrap border-r border-[#d0d0d0] ${i === 1 ? 'bg-[linear-gradient(#f9d89c,#f2bd5e)] text-[#5a1a78]' : 'bg-[#f6f6f6]'}`}><Mx t={t} /></div>
            ))}
          </div>
          <div className="h-[19px] flex shrink-0 border-b border-[#bbb]">
            {cols.map(([w], i) => (
              <div key={i} className={`${w} shrink-0 border-r border-[#d0d0d0] ${i === 0 ? "bg-[#fbd89c] text-[#a02060] text-[14px] leading-[18px] pl-[8px] [font-family:'Liberation_Mono',monospace]" : ''} ${i === 1 ? 'bg-[#ddeeff] border-r-black' : ''}`}>{i === 0 ? '1*' : ''}</div>
            ))}
          </div>
          <div className="flex-1" />
          <div className="h-[20px] shrink-0 bg-[#f0f0f0] flex items-center pl-[9px]">
            <span className="w-[5px] h-[8px] bg-[#555] [clip-path:polygon(100%_0,0_50%,100%_100%)]" />
            <span className="ml-[10px] w-[522px] h-[18px] rounded-[2px] bg-[linear-gradient(#f2f2f2,#c4c4c4)] border border-[#aaa] text-[9px] leading-[15px] text-center text-[#555]">|||</span>
            <span className="ml-auto mr-[9px] w-[5px] h-[8px] bg-[#555] [clip-path:polygon(0_0,100%_50%,0_100%)]" />
          </div>
        </div>
      </div>
    </div>
  );
}

type Prop = { n: string; v?: string; blue?: boolean; sel?: boolean; grey?: boolean; box?: boolean; plus?: boolean };
const props: Prop[] = [
  { n: '名称', v: 'DJ-1-2', blue: true },
  { n: '截面长度(mm)', v: '2000', box: true },
  { n: '截面宽度(mm)', v: '2000', box: true },
  { n: '高度(mm)', v: '300', box: true },
  { n: '相对底标高(m', v: '(0.3)', box: true },
  { n: '横向受力筋', blue: true, box: true },
  { n: '纵向受力筋', blue: true, box: true },
  { n: '短向加强筋', sel: true, box: true },
  { n: '顶部柱间配筋', box: true },
  { n: '其它钢筋', blue: true },
  { n: '备注', box: true },
  { n: '锚固搭接', grey: true, plus: true },
];

function PropPanel() {
  return (
    <div className="flex flex-col h-[710px] shrink-0">
      <PanelHead t="属性编辑器" close={false} />
      <div className="h-[4px] shrink-0" />
      <div className="flex-1 bg-white text-[15px] text-[#111] overflow-hidden pl-[2px] border-b-2 border-[#b4b4b4]">
        <div className="h-[23px] flex border-y border-[#c8c8c8]">
          <div className="w-[21px] shrink-0 bg-[#f0f0f0] border-r border-[#c8c8c8]" />
          <div className="w-[120px] shrink-0 bg-[linear-gradient(#fbfbfb,#ececec)] text-center leading-[21px] tracking-[-0.2px]">属性名称</div>
          <div className="w-[357px] shrink-0 bg-[linear-gradient(#f9d89c,#f2bd5e)] text-center leading-[21px] text-[#5a1a78] border-x border-[#c8c8c8]">属性值</div>
          <div className="flex-1 bg-[#f0f0f0] pl-[8px] leading-[21px] overflow-hidden">附</div>
        </div>
        {props.map((p, i) => (
          <div key={p.n} className="h-[19px] flex border-b border-[#c8c8c8]">
            <div className={`w-[21px] shrink-0 text-center leading-[18px] text-[14px] [font-family:'Liberation_Mono',monospace] border-r border-[#e0e0e0] ${p.sel ? 'bg-[#fbd89c] text-[#a02060]' : 'bg-[#f4f4f4] text-[#222]'}`}>{i + 1}</div>
            <div className={`w-[120px] shrink-0 flex items-center whitespace-nowrap overflow-hidden ${p.plus ? 'pl-[2px]' : 'pl-[21px]'} border-r border-[#c8c8c8] ${p.blue ? 'text-[#0a1eff]' : ''} ${p.sel ? 'bg-[#3399ff] text-white' : ''} ${p.grey ? 'text-[#8a8a8a]' : ''}`}>
              {p.plus && <span className="w-[12px] h-[12px] border border-[#999] bg-[#f0f0f0] text-[12px] leading-[9px] text-center text-black mr-[7px] shrink-0">+</span>}
              <Mx t={p.n} />
            </div>
            <div className={`w-[357px] shrink-0 pl-[2px] leading-[18px] text-[15.600px] border-r border-[#c8c8c8] ${p.sel ? 'bg-[#ddeeff]' : ''}`}>{p.v && <Mx t={p.v} />}</div>
            <div className="flex-1 flex items-center pl-[9px]">
              {p.box && <span className="w-[12px] h-[13px] border border-[#888] bg-[#f2f2f2] shrink-0" />}
            </div>
          </div>
        ))}
      </div>
    </div>
  );
}

function Preview() {
  const vs = [1564, 1571, 1578, 1585, 1592, 1599, 1606, 1613];
  const hs = [882, 895, 902, 909, 916, 923];
  return (
    <div className="h-[198px] mt-[5px] bg-black shrink-0 ml-px">
      <svg viewBox="1352 783 515 198" width="515" height="198" className="block">
        <defs>
          <clipPath id="hatch"><path d="M1557 875h15l18 13 17 12 8 12 4 16h-62z" /></clipPath>
        </defs>
        <path d="M1557 875h15l18 13 17 12 8 12 4 16h-62z" fill="#f00000" />
        <g clipPath="url(#hatch)" stroke="#fff" strokeWidth="1">
          {vs.map((x) => <path key={x} d={`M${x} 870v60`} />)}
          {hs.map((y) => <path key={y} d={`M1555 ${y}h70`} />)}
        </g>
        <path d="M1557 888.500h33M1601 907v21M1601 907h14" stroke="#fff" />
        <path d="M1572 875l43 37 4 16" fill="none" stroke="#fff" strokeDasharray="2 1" />
        <rect x="1557.500" y="795.500" width="143" height="133" fill="none" stroke="#fff" />
        <path d="M1547 795v133M1539 795h17M1539 928h17M1544 792l6 6M1544 925l6 6M1557 938h144M1557 931v14M1701 931v14M1554 941l6-6M1698 941l6-6" fill="none" stroke="#fff" />
        <path d="M1590 888l9-11h16M1607 907h19" fill="none" stroke="#fff" />
        <g fill="#eef4ff" fontFamily="Noto Sans CJK SC">
          <text transform="translate(1541 878) rotate(-90)" fontSize="10">截面宽度</text>
          <text x="1573" y="876" fontSize="9.500">纵向受力筋</text>
          <text x="1609" y="904" fontSize="9.500">横向受力筋</text>
          <text x="1633" y="953" fontSize="10" textAnchor="middle">截面长度</text>
        </g>
        <text transform="translate(1550 873) rotate(-90)" fontSize="10" fill="#eef4ff" fontFamily="Liberation Mono">2000</text>
        <rect x="1617" y="932" width="24" height="12" fill="#000" />
        <text x="1628" y="942" fontSize="10" fill="#eef4ff" textAnchor="middle" fontFamily="Liberation Mono">2000</text>
        <text x="1632" y="967" fontSize="16" fill="#fff" textAnchor="middle" fontFamily="Noto Sans CJK SC">矩形独立基础</text>
        <rect x="1583" y="969" width="100" height="3" fill="#fff" />
      </svg>
    </div>
  );
}

function StatusBar() {
  const cell = 'h-[24px] flex items-center border-l border-t border-[#d4d4d4] bg-[#f4f4f4] overflow-hidden whitespace-nowrap text-[14.500px] pl-[2px] pt-[3px] shrink-0';
  return (
    <div className="h-[24px] flex shrink-0 text-[#111]">
      <div className={`${cell} w-[112px] border-l-0`}><Mx t="55 Y=4992" /></div>
      <div className={`${cell} ml-[4px] w-[78px]`}><Mx t="层高:4.2m" /></div>
      <div className={`${cell} ml-[2px] w-[98px]`}><Mx t="底标高:7.15m" /></div>
      <div className={`${cell} ml-[2px] w-[48px] pl-[3px]`}><Mx t="0" /></div>
      <div className={`${cell} ml-[1px] w-[1468px]`}>按鼠标左键指定第一个角点，或拾取构件图元</div>
      <div className={`${cell} w-[54px] border-[#999]`}><Mx t="967.3 I" /></div>
    </div>
  );
}

export default function App() {
  return (
    <div className={`relative w-[1867px] h-[1005px] overflow-hidden bg-[#f0f0f0] flex flex-col ${sans}`}>
      <div className="h-[5px] shrink-0 bg-[linear-gradient(90deg,#a8cbe6,#cfe0ee_40%,#b9d4ea)] border-b border-[#4a5a6a]" />
      <MenuBar />
      <TopTools />
      <div className="flex h-[913px] shrink-0">
        <NavPanel />
        <div className="w-[205px] ml-[4px] shrink-0 flex flex-col">
          <ListPanel />
          <SheetPanel />
          <LayerPanel />
        </div>
        <div className="w-[1005px] ml-[3px] shrink-0 flex flex-col">
          <EditTools />
          <Canvas />
          <SnapBar />
          <RebarPanel />
        </div>
        <div className="w-[516px] ml-[3px] shrink-0 flex flex-col">
          <PropPanel />
          <Preview />
        </div>
      </div>
      <StatusBar />
      {/* hand drawn red arrows on top of the property grid */}
      <svg viewBox="0 0 1867 1005" width="1867" height="1005" className="absolute inset-0 pointer-events-none">
        <path d="M1531 165l23 7-6 2 43 53-50-50-9 11z" fill="#fb3a38" />
        <path d="M1565 152l24 3-5 5 151 103-158-92-5 3z" fill="#fb3a38" />
      </svg>
    </div>
  );
}
